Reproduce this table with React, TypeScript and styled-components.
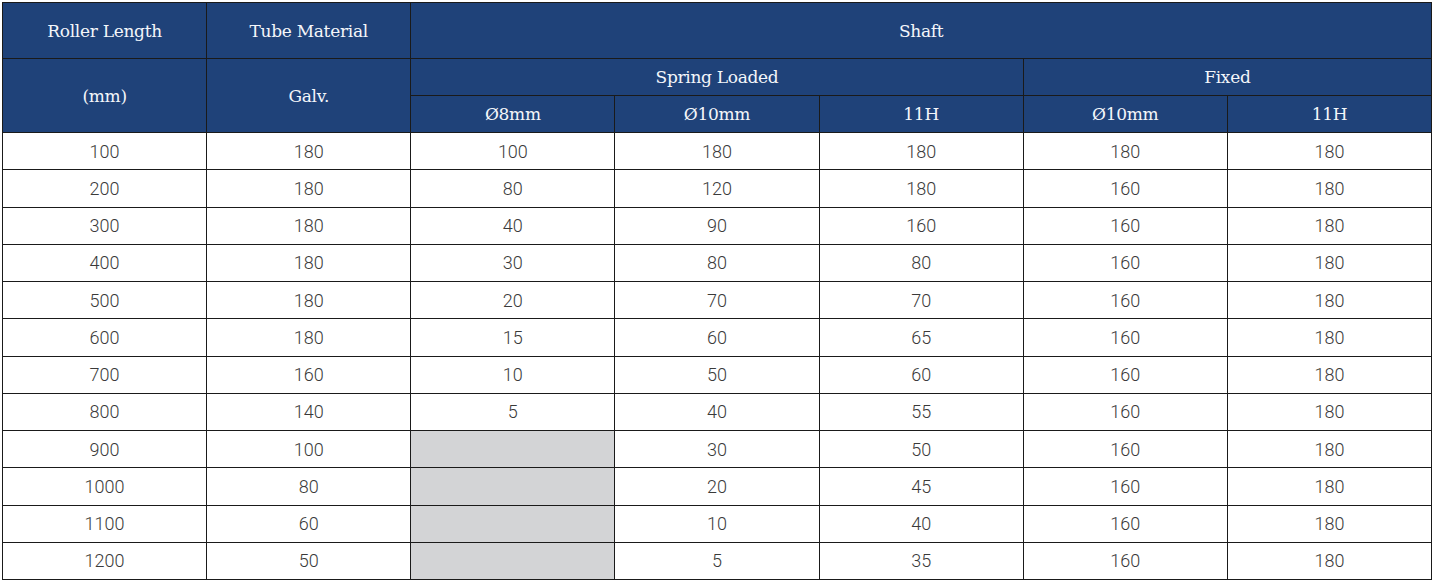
import React from "react";
import styled, { createGlobalStyle } from "styled-components";

const colors = {
  header: "#1f4279",
  border: "#1a1a1a",
  muted: "#d3d4d6",
  text: "#3a3a3a",
};

const GlobalStyle = createGlobalStyle`
  html, body {
    margin: 0;
    padding: 0;
    background: #ffffff;
  }
`;

const Page = styled.div`
  padding: 2px 0 0 2px;
  width: 1430px;
`;

const Table = styled.table`
  width: 1430px;
  border-collapse: collapse;
  table-layout: fixed;
`;

const HeadCell = styled.th<{ $h?: number }>`
  background: ${colors.header};
  color: #f4f6fa;
  font-family: "DejaVu Serif", "Liberation Serif", serif;
  font-weight: 400;
  font-size: 17px;
  letter-spacing: -0.3px;
  text-align: center;
  vertical-align: middle;
  border: 1px solid ${colors.border};
  height: ${(p) => p.$h ?? 36}px;
  padding: 0;
`;

const Cell = styled.td<{ $muted?: boolean }>`
  background: ${(p) => (p.$muted ? colors.muted : "#ffffff")};
  color: ${colors.text};
  font-family: Roboto, "Noto Sans", sans-serif;
  font-weight: 300;
  font-size: 18px;
  text-align: center;
  vertical-align: middle;
  border: 1px solid ${colors.border};
  height: 36.25px;
  padding: 0;
`;

const rows: (string | null)[][] = [
  ["100", "180", "100", "180", "180", "180", "180"],
  ["200", "180", "80", "120", "180", "160", "180"],
  ["300", "180", "40", "90", "160", "160", "180"],
  ["400", "180", "30", "80", "80", "160", "180"],
  ["500", "180", "20", "70", "70", "160", "180"],
  ["600", "180", "15", "60", "65", "160", "180"],
  ["700", "160", "10", "50", "60", "160", "180"],
  ["800", "140", "5", "40", "55", "160", "180"],
  ["900", "100", null, "30", "50", "160", "180"],
  ["1000", "80", null, "20", "45", "160", "180"],
  ["1100", "60", null, "10", "40", "160", "180"],
  ["1200", "50", null, "5", "35", "160", "180"],
];

export default function App() {
  return (
    <Page>
      <GlobalStyle />
      <Table>
        <colgroup>
          {Array.from({ length: 7 }).map((_, i) => (
            <col key={i} />
          ))}
        </colgroup>
        <thead>
          <tr>
            <HeadCell $h={55}>Roller Length</HeadCell>
            <HeadCell $h={55}>Tube Material</HeadCell>
            <HeadCell $h={55} colSpan={5}>
              Shaft
            </HeadCell>
          </tr>
          <tr>
            <HeadCell rowSpan={2}>(mm)</HeadCell>
            <HeadCell rowSpan={2}>Galv.</HeadCell>
            <HeadCell colSpan={3}>Spring Loaded</HeadCell>
            <HeadCell colSpan={2}>Fixed</HeadCell>
          </tr>
          <tr>
            <HeadCell>Ø8mm</HeadCell>
            <HeadCell>Ø10mm</HeadCell>
            <HeadCell>11H</HeadCell>
            <HeadCell>Ø10mm</HeadCell>
            <HeadCell>11H</HeadCell>
          </tr>
        </thead>
        <tbody>
          {rows.map((r, i) => (
            <tr key={i}>
              {r.map((v, j) => (
                <Cell key={j} $muted={v === null}>
                  {v ?? ""}
                </Cell>
              ))}
            </tr>
          ))}
        </tbody>
      </Table>
    </Page>
  );
}
